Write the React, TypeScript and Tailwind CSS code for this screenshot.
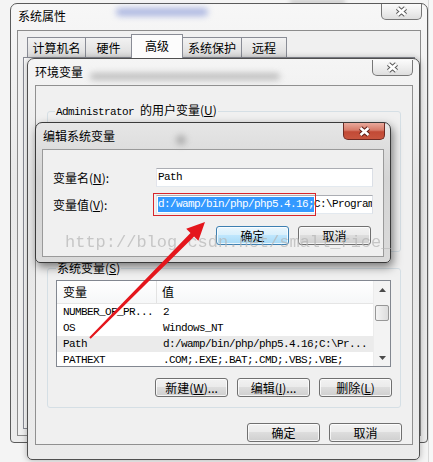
import React from "react";

const cjk = "font-['Noto_Sans_CJK_SC',sans-serif]";
const mono = "font-['Liberation_Mono','Noto_Sans_CJK_SC',monospace] text-[11px] tracking-[-0.6px]";

function CloseX({ red }: { red?: boolean }) {
  return (
    <div
      className={
        red
          ? "flex h-[17px] w-[42px] items-center justify-center rounded-b-[5px] border border-t-0 border-[#6e2a23] bg-[linear-gradient(#e9a99c_0%,#d67a68_45%,#c24a36_55%,#c8553f_100%)]"
          : "flex h-[16px] w-[41px] items-center justify-center rounded-b-[5px] border border-t-0 border-[#777] bg-[linear-gradient(#fbfbfb_0%,#eeeeee_50%,#dedede_100%)]"
      }
    >
      <svg width="15" height="11" viewBox="0 0 15 11">
        <path d="M3.5 2 L11.5 9 M11.5 2 L3.5 9" stroke={red ? "#5b1c16" : "#5a5a5a"} strokeWidth="4.6" />
        <path d="M3.5 2 L11.5 9 M11.5 2 L3.5 9" stroke="#fff" strokeWidth="2.6" />
      </svg>
    </div>
  );
}

function Btn({ children, focus }: { children: React.ReactNode; focus?: boolean }) {
  return (
    <div
      className={`flex h-[19px] w-[73px] items-center justify-center rounded-[3px] border text-[12px] leading-none shadow-[inset_0_0_0_1px_rgba(255,255,255,0.75)] ${
        focus
          ? "border-[#3c7fb1] bg-[linear-gradient(#eaf6fd_0%,#d9f0fc_45%,#bee6fd_50%,#a7d9f5_100%)]"
          : "border-[#707070] bg-[linear-gradient(#f2f2f2_0%,#ebebeb_45%,#dddddd_50%,#cfcfcf_100%)]"
      }`}
    >
      {children}
    </div>
  );
}

const rows = [
  ["NUMBER_OF_PR...", "2"],
  ["OS", "Windows_NT"],
  ["Path", "d:/wamp/bin/php/php5.4.16;C:\\Pr..."],
  ["PATHEXT", ".COM;.EXE;.BAT;.CMD;.VBS;.VBE;"],
];

export default function App() {
  return (
    <div className={`relative h-[462px] w-[433px] overflow-hidden bg-[#f4f4f4] text-black ${cjk}`}>
      {/* desktop behind */}
      <div className="absolute left-[290px] top-0 h-[4px] w-[55px] bg-[#c4c4c4] blur-[2px]" />
      <div className="absolute right-0 top-0 h-full w-[5px] border-l border-[#d8d8d8] bg-[#f7f7f7]" />

      {/* 系统属性 */}
      <div className="absolute left-[10px] top-[3px] h-[440px] w-[418px] rounded-t-[7px] rounded-b-[4px] border border-[#5b5b5b] bg-[linear-gradient(#f7f7f7,#e9e9e9_40%,#ececec)]">
        <div className="absolute left-[105px] top-[4px] h-[8px] w-[92px] rounded bg-[#8c9bd8] opacity-70 blur-[3px]" />
        <div className="flex h-[26px] items-start justify-between pl-[7px] pr-[5px]">
          <span className="mt-[4px] text-[12px] leading-[16px]">系统属性</span>
          <CloseX />
        </div>
        <div className="mx-[6px] h-[406px] border border-[#8c8c8c] bg-[#f0f0f0]">
          <div className="flex h-[26px] items-end pl-[9px] text-[12px]">
            <div className="flex h-[20px] w-[59px] items-center justify-center border border-b-0 border-[#898c95] bg-[linear-gradient(#f2f2f2,#dcdcdc)]">计算机名</div>
            <div className="-ml-px flex h-[20px] w-[47px] items-center justify-center border border-b-0 border-[#898c95] bg-[linear-gradient(#f2f2f2,#dcdcdc)]">硬件</div>
            <div className="relative z-10 -mb-px -ml-px flex h-[24px] w-[52px] items-start justify-center border border-b-0 border-[#898c95] bg-[#fcfcfc] pt-[2px]">高级</div>
            <div className="-ml-px flex h-[20px] w-[60px] items-center justify-center border border-b-0 border-[#898c95] bg-[linear-gradient(#f2f2f2,#dcdcdc)]">系统保护</div>
            <div className="-ml-px flex h-[20px] w-[46px] items-center justify-center border border-b-0 border-[#898c95] bg-[linear-gradient(#f2f2f2,#dcdcdc)]">远程</div>
          </div>
          <div className="mx-[5px] h-[372px] border border-[#898c95] bg-[#fbfbfb]" />
        </div>
      </div>

      {/* 环境变量 */}
      <div className="absolute left-[27px] top-[58px] h-[402px] w-[393px] rounded-t-[7px] rounded-b-[5px] border border-[#4f4f4f] bg-[linear-gradient(#f5f5f5,#e7e7e7_30%,#ebebeb)] shadow-[0_0_6px_rgba(0,0,0,0.3)]">
        <div className="absolute left-[62px] top-[14px] h-[7px] w-[190px] rounded bg-[#9a9a9a] opacity-60 blur-[3px]" />
        <div className="flex h-[26px] items-start justify-between pl-[7px] pr-[6px]">
          <span className="mt-[5px] text-[12px] leading-[16px]">环境变量</span>
          <div className="mt-px">
            <CloseX />
          </div>
        </div>
        <div className="ml-[7px] mr-[6px] flex h-[360px] flex-col border border-[#909090] bg-[#f0f0f0]">
          <fieldset className="mx-[11px] mt-[16px] h-[150px] rounded-[3px] border border-[#d5dfe5] px-[7px]">
            <legend className="px-[1px] text-[12px] leading-[16px]">
              <span className={mono}>Administrator </span>的用户变量(<u>U</u>)
            </legend>
          </fieldset>

          <fieldset className="mx-[11px] mt-[8px] h-[148px] rounded-[3px] border border-[#d5dfe5] px-[8px]">
            <legend className="px-[1px] text-[12px] leading-[16px]">
              系统变量(<u>S</u>)
            </legend>
            <div className="mt-[4px] flex h-[87px] w-[335px] border border-[#828790] bg-white">
              <div className="flex min-w-0 flex-1 flex-col overflow-hidden">
                <div className="flex h-[23px] shrink-0 border-b border-[#e5e5e5] bg-[linear-gradient(#ffffff,#f6f7f8)] text-[12px]">
                  <div className="flex w-[100px] items-center border-r border-[#e3e3e3] pl-[6px]">变量</div>
                  <div className="flex items-center pl-[5px]">值</div>
                </div>
                {rows.map(([k, v]) => (
                  <div key={k} className={`flex h-[16px] shrink-0 items-center whitespace-nowrap ${mono} ${k === "Path" ? "bg-[#ebebeb]" : ""}`}>
                    <div className="w-[100px] pl-[6px]">{k}</div>
                    <div className="pl-[6px]">{v}</div>
                  </div>
                ))}
              </div>
              <div className="flex w-[17px] flex-col border-l border-[#ececec] bg-[#f3f3f3]">
                <div className="flex h-[17px] items-center justify-center">
                  <svg width="7" height="4" viewBox="0 0 7 4"><path d="M0 4 L3.5 0 L7 4 Z" fill="#4a4a4a" /></svg>
                </div>
                <div className="mx-[1px] mt-[7px] h-[16px] rounded-[2px] border border-[#979797] bg-[linear-gradient(90deg,#f4f4f4,#dcdcdc)]" />
                <div className="flex-1" />
                <div className="flex h-[17px] items-center justify-center">
                  <svg width="7" height="4" viewBox="0 0 7 4"><path d="M0 0 L3.5 4 L7 0 Z" fill="#4a4a4a" /></svg>
                </div>
              </div>
            </div>
            <div className="mt-[11px] flex justify-end gap-[9px]">
              <Btn>新建(<u>W</u>)...</Btn>
              <Btn>编辑(<u>I</u>)...</Btn>
              <Btn>删除(<u>L</u>)</Btn>
            </div>
          </fieldset>

          <div className="mt-[15px] flex justify-end gap-[9px] pr-[10px]">
            <Btn>确定</Btn>
            <Btn>取消</Btn>
          </div>
        </div>
      </div>

      {/* 编辑系统变量 */}
      <div className="absolute left-[35px] top-[122px] h-[141px] w-[356px] rounded-t-[7px] rounded-b-[5px] border border-[#3a3a3a] bg-[linear-gradient(#e6e6e6,#d4d4d4_40%,#dadada)] shadow-[2px_4px_10px_rgba(0,0,0,0.5)]">
        <div className="absolute left-[140px] top-[12px] h-[10px] w-[10px] rounded-full bg-[#8a8a8a] opacity-60 blur-[3px]" />
        <div className="flex h-[26px] items-start justify-between pl-[7px] pr-[5px]">
          <span className="mt-[5px] text-[12px] leading-[16px]">编辑系统变量</span>
          <CloseX red />
        </div>
        <div className="mx-[6px] h-[108px] border border-[#9a9a9a] bg-[#f0f0f0] pt-[18px]">
          <div className="flex items-center">
            <div className="w-[113px] pl-[10px] text-[12px]">变量名(<u>N</u>):</div>
            <div className={`flex h-[19px] w-[217px] items-center border border-[#abadb3] border-l-[#e2e3ea] border-r-[#dbdfe6] border-b-[#e3e9ef] bg-white pl-[1px] ${mono}`}>
              Path
            </div>
          </div>
          <div className="mt-[8px] flex items-center">
            <div className="w-[113px] pl-[10px] text-[12px]">变量值(<u>V</u>):</div>
            <div className={`flex h-[19px] w-[217px] items-center overflow-hidden whitespace-nowrap border border-[#abadb3] border-l-[#e2e3ea] border-r-[#dbdfe6] border-b-[#e3e9ef] bg-white pl-[1px] ${mono}`}>
              <span className="flex h-[15px] items-center bg-[#3399ff] text-white">d:/wamp/bin/php/php5.4.16;</span>
              <span>C:\Program Files</span>
            </div>
          </div>
          <div className="mt-[12px] flex justify-end gap-[9px] pr-[12px]">
            <Btn focus>确定</Btn>
            <Btn>取消</Btn>
          </div>
        </div>
      </div>

      {/* red annotation box */}
      <div className="pointer-events-none absolute left-[153px] top-[193px] h-[23px] w-[163px] border border-[#d8262b]" />

      {/* watermark */}
      <div className="pointer-events-none absolute left-[65px] top-[231px] font-['Liberation_Mono',monospace] text-[17px] leading-[24px] text-[#b5b5b5] opacity-70">
        http://blog.csdn.net/small_rice_
      </div>

      {/* red arrow */}
      <svg className="pointer-events-none absolute left-0 top-0" width="433" height="462" viewBox="0 0 433 462">
        <polygon
          points="89.3,337.3 190.5,233.0 186.2,228.8 205,222 198.4,240.8 194.1,236.6 90.7,338.7"
          fill="#e4161c"
        />
      </svg>
    </div>
  );
}
